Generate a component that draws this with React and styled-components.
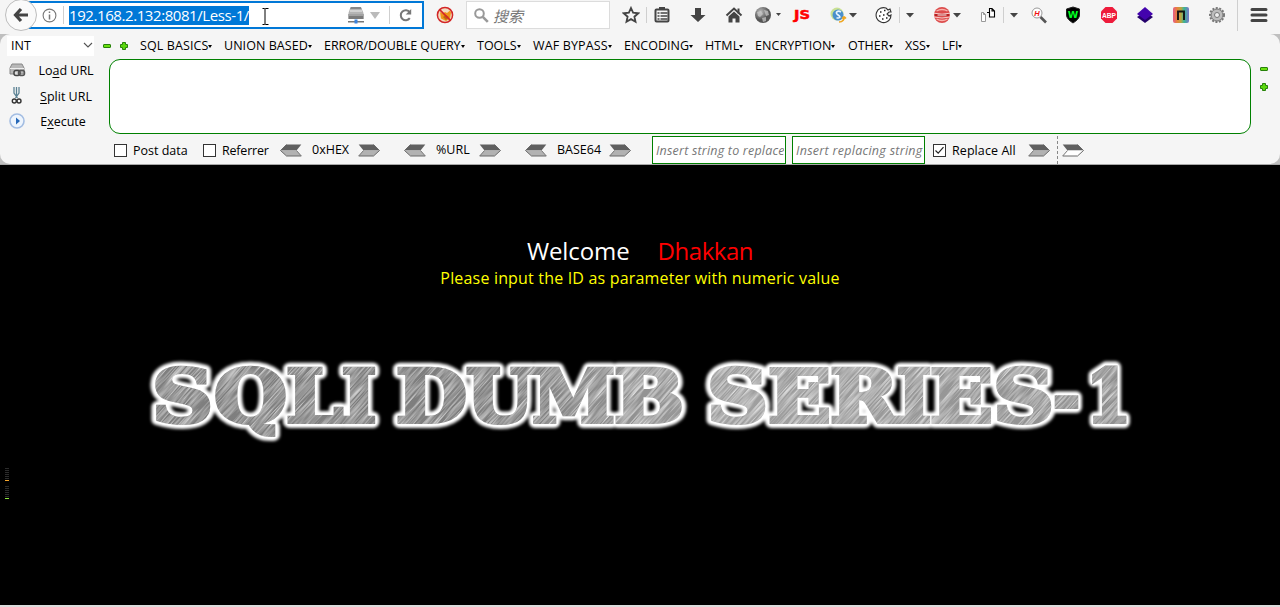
import React from "react";
import styled, { createGlobalStyle } from "styled-components";

const Global = createGlobalStyle`
  * { box-sizing: border-box; }
  body { margin: 0; background: #000; font-family: "Open Sans", "Noto Sans CJK SC", sans-serif; overflow: hidden; }
  svg { display: block; flex: none; }
`;

const Browser = styled.div`
  width: 1280px; height: 607px; display: flex; flex-direction: column; background: #000;
`;
const TopBar = styled.header`
  height: 34px; flex: none; display: flex; align-items: flex-start; background: #f5f5f5; overflow: hidden;
`;
const BackButton = styled.div`
  width: 32px; height: 32px; margin: -1px -9px 0 5px; border-radius: 50%; border: 1px solid #bdbdbd;
  background: #fafafa; display: flex; align-items: center; justify-content: center; z-index: 1; flex: none;
`;
const UrlBar = styled.div`
  width: 396px; height: 28px; margin-top: 1px; border: 2px solid #0078d7; background: #fff;
  display: flex; align-items: center; padding-left: 12px; flex: none;
`;
const Divider = styled.i`
  width: 1px; height: ${(p) => p.$h || 16}px; margin-left: ${(p) => p.$gap || 0}px; background: #cfcfcf; flex: none;
`;
const Selection = styled.span`
  width: 180px; height: 19px; margin-left: 5px; background: #0078d7; color: #fff; flex: none;
  font-size: 15px; line-height: 19px; letter-spacing: -0.42px; white-space: nowrap;
`;
const SearchBox = styled.div`
  width: 144px; height: 28px; margin: 1px 0 0 12px; border: 1px solid #dcdcdc; background: #fff; flex: none;
  display: flex; align-items: center; padding-left: 7px; gap: 4px;
  font-size: 15px; font-style: italic; color: #777;
`;
const Tools = styled.div`
  display: flex; align-items: center; height: 30px; margin-left: 12px; flex: none;
`;
const Slot = styled.span`
  display: flex; margin-left: ${(p) => p.$gap || 0}px; flex: none;
`;

const Frame = styled.section`
  height: 131px; flex: none; background: #bfbfbf; border-bottom: 1px solid #a8a8a8;
`;
const HackBar = styled.div`
  height: 130px; border-radius: 10px; background: #f5f5f5; font-size: 12.5px; color: #000; overflow: hidden;
`;
const MenuRow = styled.nav`
  height: 25px; display: flex; align-items: center; padding: 0 0 2px 7px;
`;
const TypeSelect = styled.div`
  width: 87px; height: 20px; background: #fff; display: flex; align-items: center; justify-content: space-between;
  padding: 0 1px 0 4px; margin-right: 9px; line-height: 20px;
`;
const Menu = styled.span`
  width: ${(p) => p.$w}px; height: 22px; line-height: 22px; display: flex; align-items: center; flex: none;
  white-space: nowrap; letter-spacing: ${(p) => p.$ls || 0}px;
  &::after { content: ""; border: 2.5px solid transparent; border-top: 3px solid #000; border-bottom: 0; margin: 1px 0 0 0; }
`;
const Middle = styled.div`display: flex; height: 75px;`;
const Actions = styled.div`
  width: 109px; display: flex; flex-direction: column; padding-left: 8px;
`;
const Action = styled.div`
  height: 25.5px; display: flex; align-items: center; line-height: 22px; margin-top: ${(p) => p.$up || 0}px;
`;
const ActionLabel = styled.span`
  width: 76px; text-align: center; margin-left: ${(p) => p.$gap || 1}px; white-space: nowrap; padding-top: 3px;
  u { text-underline-offset: 2px; text-decoration-skip-ink: none; }
`;
const UrlArea = styled.div`
  width: 1142px; height: 75px; border: 1px solid #008000; border-radius: 11px; background: #fff;
`;
const Resize = styled.div`
  display: flex; flex-direction: column; gap: 10px; padding: 6px 0 0 9px;
`;
const Options = styled.div`
  display: flex; align-items: center; height: 28px; margin-top: 2px; padding-left: 114px;
`;
const CheckBox = styled.span`
  width: 13px; height: 13px; border: 1px solid #333; background: #fff; flex: none; margin-top: 1px;
`;
const Label = styled.span`
  width: ${(p) => p.$w}px; margin-left: ${(p) => p.$gap || 6}px; flex: none; line-height: 20px; white-space: nowrap;
  padding-top: ${(p) => (p.$raised ? 0 : 2)}px; letter-spacing: ${(p) => p.$ls || 0}px;
`;
const Field = styled.div`
  width: ${(p) => p.$w}px; height: 28px; margin-left: ${(p) => p.$gap}px; flex: none; border: 1px solid #008000; background: #fff;
  padding: 0 1px 0 3px; font-style: italic; color: #777; line-height: 28px;
  span { display: block; overflow: hidden; white-space: nowrap; letter-spacing: ${(p) => p.$ls}px; }
`;
const Dash = styled.i`
  height: 28px; margin-left: 7px; border-left: 1px dashed #888; flex: none;
`;

const Page = styled.main`
  flex: 1; display: flex; flex-direction: column; align-items: center; background: #000;
  border-bottom: 2px solid #dcdcdc; padding-top: 69px;
`;
const Heading = styled.h1`
  margin: 0; height: 34px; line-height: 34px; font-size: 24px; font-weight: 400; color: #fff;
  display: flex; gap: 28px; letter-spacing: -0.1px;
  span { color: #f00; letter-spacing: -0.45px; }
`;
const Hint = styled.p`
  margin: 0; height: 20px; line-height: 20px; font-size: 16px; color: #ff0; white-space: nowrap; letter-spacing: 0.18px;
`;
const Banner = styled.div`width: 1280px; margin-top: 62px; height: 100px;`;
const Meters = styled.div`
  width: 1280px; padding: 18px 0 0 5px; display: flex; flex-direction: column; gap: 5px;
`;
const Meter = styled.i`
  width: 4px; height: 13px; border-bottom: 1px solid ${(p) => p.$c};
  background: repeating-linear-gradient(#2b2b2b 0 1px, #000 1px 2px);
`;

const Icon = ({ w = 18, h = 18, children }) => (
  <svg width={w} height={h} viewBox={`0 0 ${w} ${h}`}>{children}</svg>
);
const Caret = ({ w = 8 }) => (
  <Icon w={w} h={5}><path d={`M0 0H${w}L${w / 2} ${w / 2 + 0.5}Z`} fill="#444" /></Icon>
);
const Minus = () => (
  <Icon w={8} h={8}><rect x=".5" y="2.5" width="7" height="3" rx=".5" fill="#6be010" stroke="#27820a" /></Icon>
);
const Plus = () => (
  <Icon w={8} h={8}><path d="M2.5.5h3v2h2v3h-2v2h-3v-2h-2v-3h2z" fill="#5bd80c" stroke="#27820a" /></Icon>
);
const Server = () => (
  <Icon>
    <path d="M3.500 1h10.500l2.500 6v6h-15V7z" fill="#b5b5b5" /><path d="M4 1h9.700l.8 2H3.200z" fill="#888" />
    <path d="M3 5h12" stroke="#ddd" strokeWidth="1.500" />
    <path d="M1.500 8h15v5h-15z" fill="#7b7b7b" /><path d="M2 9h14" stroke="#ccc" />
    <path d="M1 15h16v1.500H1z" fill="#777" /><rect x="7.500" y="13.500" width="3" height="4" fill="#3a82dd" />
  </Icon>
);
const Arrow = ({ left, open }) => (
  <svg width="22" height="13" viewBox="0 0 22 13">
    <g transform={left ? "matrix(-1 0 0 1 22 0)" : undefined}>
      <path d="M.7.5H15.5L21.5 6.5H5.5Z" fill="#606060" />
      <path d="M5.5 6.5h16l-6 5.5H.7Z" fill={open ? "#fff" : "#b2b2b2"} />
      <path d="M15.5.5 21.5 6.5 15.5 12H.7" fill="none" stroke="#6a6a6a" strokeWidth="1" />
      <path d="M.7 12 5.5 6.5" stroke="#777" fill="none" />
    </g>
  </svg>
);

const menus = [
  ["SQL BASICS", 84, 0.1], ["UNION BASED", 100, 0.05], ["ERROR/DOUBLE QUERY", 153, -0.06], ["TOOLS", 56, 0],
  ["WAF BYPASS", 91, 0.15], ["ENCODING", 81, 0], ["HTML", 50, 0.1], ["ENCRYPTION", 93, 0.05], ["OTHER", 57, 0],
  ["XSS", 37, 0], ["LFI", 30, 0],
];

const words = [
  [["S", 152, 61], ["Q", 214, 73], ["L", 286, 57], ["I", 341.5, 35]],
  [["D", 396, 71], ["U", 466, 68], ["M", 532, 83], ["B", 614, 70]],
  [["S", 707, 61], ["E", 768, 63], ["R", 830, 68], ["I", 896.5, 35], ["E", 930, 63], ["S", 993, 61], ["-", 1053, 27], ["1", 1086, 45]],
];
const Letters = (props) => (
  <g {...props}>
    {words.map((word, i) => (
      <text key={i} y="72.2">
        {word.map(([ch, x, w], k) => (
          <tspan key={k} x={x} textLength={w} lengthAdjust="spacingAndGlyphs">{ch}</tspan>
        ))}
      </text>
    ))}
  </g>
);
const Title = () => (
  <svg width="1280" height="100" viewBox="0 0 1280 100" fontFamily="DejaVu Serif" fontWeight="700" fontSize="72">
    <defs>
      <filter id="glow" x="-5%" y="-30%" width="110%" height="160%"><feGaussianBlur stdDeviation="1.5" /></filter>
      <filter id="metal" x="0" y="0" width="100%" height="100%">
        <feTurbulence type="fractalNoise" baseFrequency=".03 .7" numOctaves="2" seed="4" />
        <feColorMatrix values="0 0 0 0 1  0 0 0 0 1  0 0 0 0 1  1.6 0 0 0 -.6" />
      </filter>
      <linearGradient id="tone" gradientUnits="userSpaceOnUse" x1="150" y1="0" x2="1130" y2="0">
        <stop offset="0" stopColor="#7f7f7f" /><stop offset=".35" stopColor="#7e7e7e" />
        <stop offset=".6" stopColor="#a0a0a0" /><stop offset="1" stopColor="#8e8e8e" />
      </linearGradient>
      <mask id="face"><Letters fill="#fff" stroke="#fff" strokeWidth="4" /></mask>
    </defs>
    <Letters fill="#fff" stroke="#fff" strokeWidth="12" strokeLinejoin="round" filter="url(#glow)" />
    <Letters fill="#fff" stroke="#fff" strokeWidth="7" strokeLinejoin="round" />
    <Letters fill="url(#tone)" stroke="url(#tone)" strokeWidth="4" />
    <g mask="url(#face)">
      <g transform="rotate(-48 640 50)"><rect x="140" y="-500" width="1000" height="1100" filter="url(#metal)" /></g>
    </g>
  </svg>
);

export default function App() {
  return (
    <>
      <Global />
      <Browser>
        <TopBar>
          <BackButton>
            <Icon w={16} h={16}><path d="M8 2 2.5 8 8 14M3 8h12" fill="none" stroke="#444" strokeWidth="3.2" /></Icon>
          </BackButton>
          <UrlBar>
            <Icon w={15} h={15}>
              <circle cx="7.5" cy="7.5" r="6.4" fill="none" stroke="#777" strokeWidth="1.1" />
              <path d="M7.5 6.5v5M7.5 3.5v1.6" stroke="#777" strokeWidth="1.5" />
            </Icon>
            <Divider $gap={6} $h={18} />
            <Selection>192.168.2.132:8081/Less-1/</Selection>
            <Slot $gap={12}>
              <Icon w={8} h={22}><path d="M1 4.500h2l.5.500.500-.500H7M3.500 5v15M1 20.500h2l.5-.500.500.500H7" transform="translate(.5 0)" fill="none" stroke="#000" /></Icon>
            </Slot>
            <Slot $gap={78}><Server /></Slot>
            <Slot $gap={5}><Icon w={10} h={7}><path d="M0 0h10L5 7z" fill="#bbb" /></Icon></Slot>
            <Divider $gap={9} $h={18} />
            <Slot $gap={9}>
              <Icon w={14} h={14}>
                <path d="M10.8 10.2A5 5 0 1 1 10.8 4.2" fill="none" stroke="#777" strokeWidth="2" />
                <path d="M12.2 1v5.5H6.7z" fill="#777" />
              </Icon>
            </Slot>
          </UrlBar>
          <Tools>
            <Icon>
              <circle cx="9" cy="9" r="7" fill="#f3dcc0" /><path d="M4 6l3 1.500L9 6l2 1 3-2.500 1 2-1 6-4 2.500-5-2.500z" fill="#ee961a" /><path d="m7 11 3-2 3 2-3 3z" fill="#b96b10" />
              <circle cx="9" cy="9" r="7.600" fill="none" stroke="#d32626" strokeWidth="1.500" /><path d="m3.600 3.600 10.800 10.800" stroke="#d32626" strokeWidth="1.600" />
            </Icon>
          </Tools>
          <SearchBox>
            <Icon w={15} h={15}><circle cx="5.5" cy="5.5" r="4.3" fill="none" stroke="#999" strokeWidth="2" /><path d="m8.8 8.8 5 5" stroke="#999" strokeWidth="2.6" /></Icon>
            搜索
          </SearchBox>
          <Tools>
            <Icon><path d="m9 2 2.1 4.7 5.2.6-3.9 3.4 1.1 5L9 13.1l-4.5 2.6 1.1-5L1.700 7.300l5.200-.6z" fill="none" stroke="#444" strokeWidth="1.8" /></Icon>
            <Divider $gap={6} />
            <Slot $gap={6}><Icon>
              <rect x="2.500" y="3.500" width="13" height="12" rx="1" fill="#f5f5f5" stroke="#444" strokeWidth="2" />
              <path d="M6 1h6v3H6z" fill="#444" /><path d="M4.500 7h2M4.500 10h2M4.500 13h2M7.500 7h7M7.500 10h7M7.500 13h7" stroke="#444" strokeWidth="1.500" />
            </Icon></Slot>
            <Slot $gap={18}><Icon><path d="M6 2h6v7h4.500L9 16 1.500 9H6z" fill="#444" /></Icon></Slot>
            <Slot $gap={18}><Icon>
              <path d="m1.500 9.500 7.500-7 7.500 7" fill="none" stroke="#444" strokeWidth="2" /><path d="M12.500 2.500h2v5h-2z" fill="#444" />
              <path d="m9 5.500 5.500 5v6h-4v-4h-3v4h-4v-6z" fill="#444" />
            </Icon></Slot>
            <Slot $gap={11}><Icon>
              <defs><radialGradient id="ball" cx=".35" cy=".3"><stop stopColor="#bbb" /><stop offset="1" stopColor="#555" /></radialGradient></defs>
              <circle cx="9" cy="9" r="8" fill="url(#ball)" /><path d="M3 6l4-1 2 3-3 3-2-1zM10 4l4 1 1 4-3 1zM8 12l4-1 0 4-3 1z" fill="#ccc" opacity=".7" />
            </Icon></Slot>
            <Slot $gap={4}><Caret w={5} /></Slot>
            <Slot $gap={11}><Icon w={20}><text x="2" y="13" fontFamily="DejaVu Sans" fontWeight="700" fontSize="12.500" textLength="16" lengthAdjust="spacingAndGlyphs" fill="#f00" stroke="#f00" strokeWidth=".5">JS</text></Icon></Slot>
            <Slot $gap={17}><Icon>
              <circle cx="8" cy="8" r="6.500" fill="#b8d86b" opacity=".7" /><circle cx="9" cy="9" r="5.500" fill="#4a8fcc" />
              <path d="M12 6C9 4 5.500 6.500 8.500 8.500s4 3.500-1 3.500" fill="none" stroke="#e9f5ff" strokeWidth="1.600" />
              <path d="M10 16c4 0 5.500-3 5-5.500m0 0-2 2m2-2 2 2" fill="none" stroke="#efa51d" strokeWidth="1.600" />
            </Icon></Slot>
            <Slot $gap={2}><Caret /></Slot>
            <Slot $gap={18}><Icon>
              <path d="M11 2A7.500 7.500 0 1 0 15.500 12L16 9l-2 1-2-2 2-2 2 0-1-3-2 1z" fill="#fff" stroke="#333" strokeWidth="1.100" />
              <path d="M5 6h1.500M9 4.500h1.500M4 10h1.500M8 9h1.500M7 13h1.500M11 12h1.500" stroke="#222" strokeWidth="1.500" />
            </Icon></Slot>
            <Divider $gap={6} />
            <Slot $gap={6}><Caret /></Slot>
            <Slot $gap={19}><Icon>
              <circle cx="9" cy="9" r="8" fill="#dc4c4c" /><path d="M3.500 5q5.500-3 11 0M3.500 13q5.500 3 11 0" stroke="#f9b3ad" strokeWidth="1.300" fill="none" />
              <path d="M1 7.200q8 2 16 0M1 11q8 2 16 0" stroke="#f6d0cc" fill="none" /><path d="M2 9h14" stroke="#b52121" strokeWidth="2" /><path d="M4.500 9h9" stroke="#fff" />
            </Icon></Slot>
            <Slot $gap={2}><Caret /></Slot>
            <Slot $gap={18}><Icon w={18}>
              <path d="M2.500 6.500h2l2 2v7h-4zM4.500 6.500v2h2" fill="#fff" stroke="#999" /><path d="M10.500 2.500h2.500l2.500 2.500v6h-5zM13 2.500v2.500h2.500M8 6.500h2.500" fill="#fff" stroke="#000" strokeWidth="1.100" />
            </Icon></Slot>
            <Divider $gap={6} />
            <Slot $gap={6}><Caret /></Slot>
            <Slot $gap={12}><Icon>
              <path d="m10.500 11 5.500 5.500" stroke="#555" strokeWidth="2.600" /><circle cx="7" cy="7" r="5" fill="#fff" stroke="#999" />
              <text x="4.300" y="9.700" fontFamily="Liberation Sans" fontStyle="italic" fontWeight="700" fontSize="7.500" fill="#e11">H</text>
            </Icon></Slot>
            <Slot $gap={16}><Icon>
              <path d="m9 1 6.500 2v6q0 4-6.500 8-6.500-4-6.500-8V3z" fill="#000" stroke="#222" />
              <text x="3.800" y="11.500" fontFamily="DejaVu Sans" fontWeight="700" fontSize="9.500" fill="#0f2">W</text>
            </Icon></Slot>
            <Slot $gap={18}><Icon>
              <path d="M5.500 1h7L17 5.500v7L12.500 17h-7L1 12.500v-7z" fill="#ee1b3b" />
              <text x="2" y="11.800" fontFamily="Liberation Sans" fontWeight="700" fontSize="7.800" textLength="14" lengthAdjust="spacingAndGlyphs" fill="#fff">ABP</text>
            </Icon></Slot>
            <Slot $gap={18}><Icon><path d="m9 6 8 5-8 6-8-6z" fill="#24006b" /><path d="m9 1 8 7-8 6-8-6z" fill="#4303ad" /></Icon></Slot>
            <Slot $gap={18}><Icon>
              <defs><linearGradient id="rainbow"><stop stopColor="#e35c8a" /><stop offset=".25" stopColor="#e9803b" /><stop offset=".5" stopColor="#b8a641" /><stop offset=".7" stopColor="#38b596" /><stop offset="1" stopColor="#7b75c8" /></linearGradient></defs>
              <rect x="1" y="1" width="16" height="16" rx="2" fill="url(#rainbow)" /><path d="M6 14V5.500h6V14" fill="none" stroke="#111" strokeWidth="1.900" />
            </Icon></Slot>
            <Slot $gap={18}><Icon>
              <circle cx="9" cy="9" r="7" fill="#c5c5c5" stroke="#777" strokeWidth="2" strokeDasharray="2 1.500" /><circle cx="9" cy="9" r="5.800" fill="#bdbdbd" stroke="#888" />
              <circle cx="9" cy="9" r="2.500" fill="#eee" stroke="#777" />
            </Icon></Slot>
            <Divider $gap={11} $h={31} />
            <Slot $gap={12}><Icon><path d="M2 3.500h14M2 9h14M2 14.500h14" stroke="#444" strokeWidth="3" strokeLinecap="round" /></Icon></Slot>
          </Tools>
        </TopBar>

        <Frame>
          <HackBar>
            <MenuRow>
              <TypeSelect>INT<Icon w={10} h={7}><path d="m1 1 4 4 4-4" fill="none" stroke="#555" strokeWidth="1.100" /></Icon></TypeSelect>
              <Minus />
              <Slot $gap={9}><Plus /></Slot>
              <Slot $gap={12}>{menus.map(([name, w, ls]) => <Menu key={name} $w={w} $ls={ls}>{name}</Menu>)}</Slot>
            </MenuRow>
            <Middle>
              <Actions>
                <Action $up={-2}>
                  <Icon>
                    <path d="M4 3h10l2 4v6H2V7z" fill="#b8b8b8" stroke="#888" /><path d="M2 7.500h14" stroke="#eee" />
                    <rect x="6" y="9.500" width="6" height="5" rx="2" fill="#ddd" stroke="#444" strokeWidth="1.500" /><rect x="10.500" y="9.500" width="6" height="5" rx="2" fill="none" stroke="#555" strokeWidth="1.500" />
                  </Icon>
                  <ActionLabel $gap={2}>Lo<u>a</u>d URL</ActionLabel>
                </Action>
                <Action>
                  <Icon>
                    <path d="M6 1v6l3.500 5M11 1v6l-3.500 5M8.500 1v9" fill="none" stroke="#5b8294" strokeWidth="1.300" />
                    <circle cx="6.300" cy="15" r="2" fill="none" stroke="#333" strokeWidth="1.400" /><circle cx="11" cy="15" r="2" fill="none" stroke="#333" strokeWidth="1.400" />
                  </Icon>
                  <ActionLabel $gap={2}><u>S</u>plit URL</ActionLabel>
                </Action>
                <Action>
                  <Icon><circle cx="9" cy="9" r="7" fill="#eef5fd" stroke="#a3bde2" strokeWidth="1.600" /><path d="M8 5.500v7l4-3.500z" fill="#2668b8" /></Icon>
                  <ActionLabel $gap={-1}>E<u>x</u>ecute</ActionLabel>
                </Action>
              </Actions>
              <UrlArea />
              <Resize><Minus /><Plus /></Resize>
            </Middle>
            <Options>
              <CheckBox /><Label $w={54}>Post data</Label>
              <Slot $gap={16}><CheckBox /></Slot><Label $w={46} $ls={-0.2}>Referrer</Label>
              <Slot $gap={12}><Arrow left /></Slot><Label $gap={10} $w={37} $raised>0xHEX</Label><Slot $gap={9}><Arrow /></Slot>
              <Slot $gap={24}><Arrow left /></Slot><Label $gap={10} $w={34} $raised>%URL</Label><Slot $gap={9}><Arrow /></Slot>
              <Slot $gap={24}><Arrow left /></Slot><Label $gap={10} $w={43} $raised>BASE64</Label><Slot $gap={9}><Arrow /></Slot>
              <Field $gap={21} $w={134} $ls={0.2}><span>Insert string to replace</span></Field>
              <Field $gap={6} $w={133} $ls={0.28}><span>Insert replacing string</span></Field>
              <Slot $gap={8}><CheckBox><Icon w={11} h={11}><path d="m1.500 5.500 2.700 2.700 5.300-6" fill="none" stroke="#222" strokeWidth="1.200" /></Icon></CheckBox></Slot>
              <Label $w={64} $ls={0.08}>Replace All</Label>
              <Slot $gap={12}><Arrow /></Slot><Dash /><Slot $gap={4}><Arrow open /></Slot>
            </Options>
          </HackBar>
        </Frame>

        <Page>
          <Heading>Welcome <span>Dhakkan</span></Heading>
          <Hint>Please input the ID as parameter with numeric value</Hint>
          <Banner><Title /></Banner>
          <Meters><Meter $c="#f5a52c" /><Meter $c="#8be53c" /></Meters>
        </Page>
      </Browser>
    </>
  );
}
